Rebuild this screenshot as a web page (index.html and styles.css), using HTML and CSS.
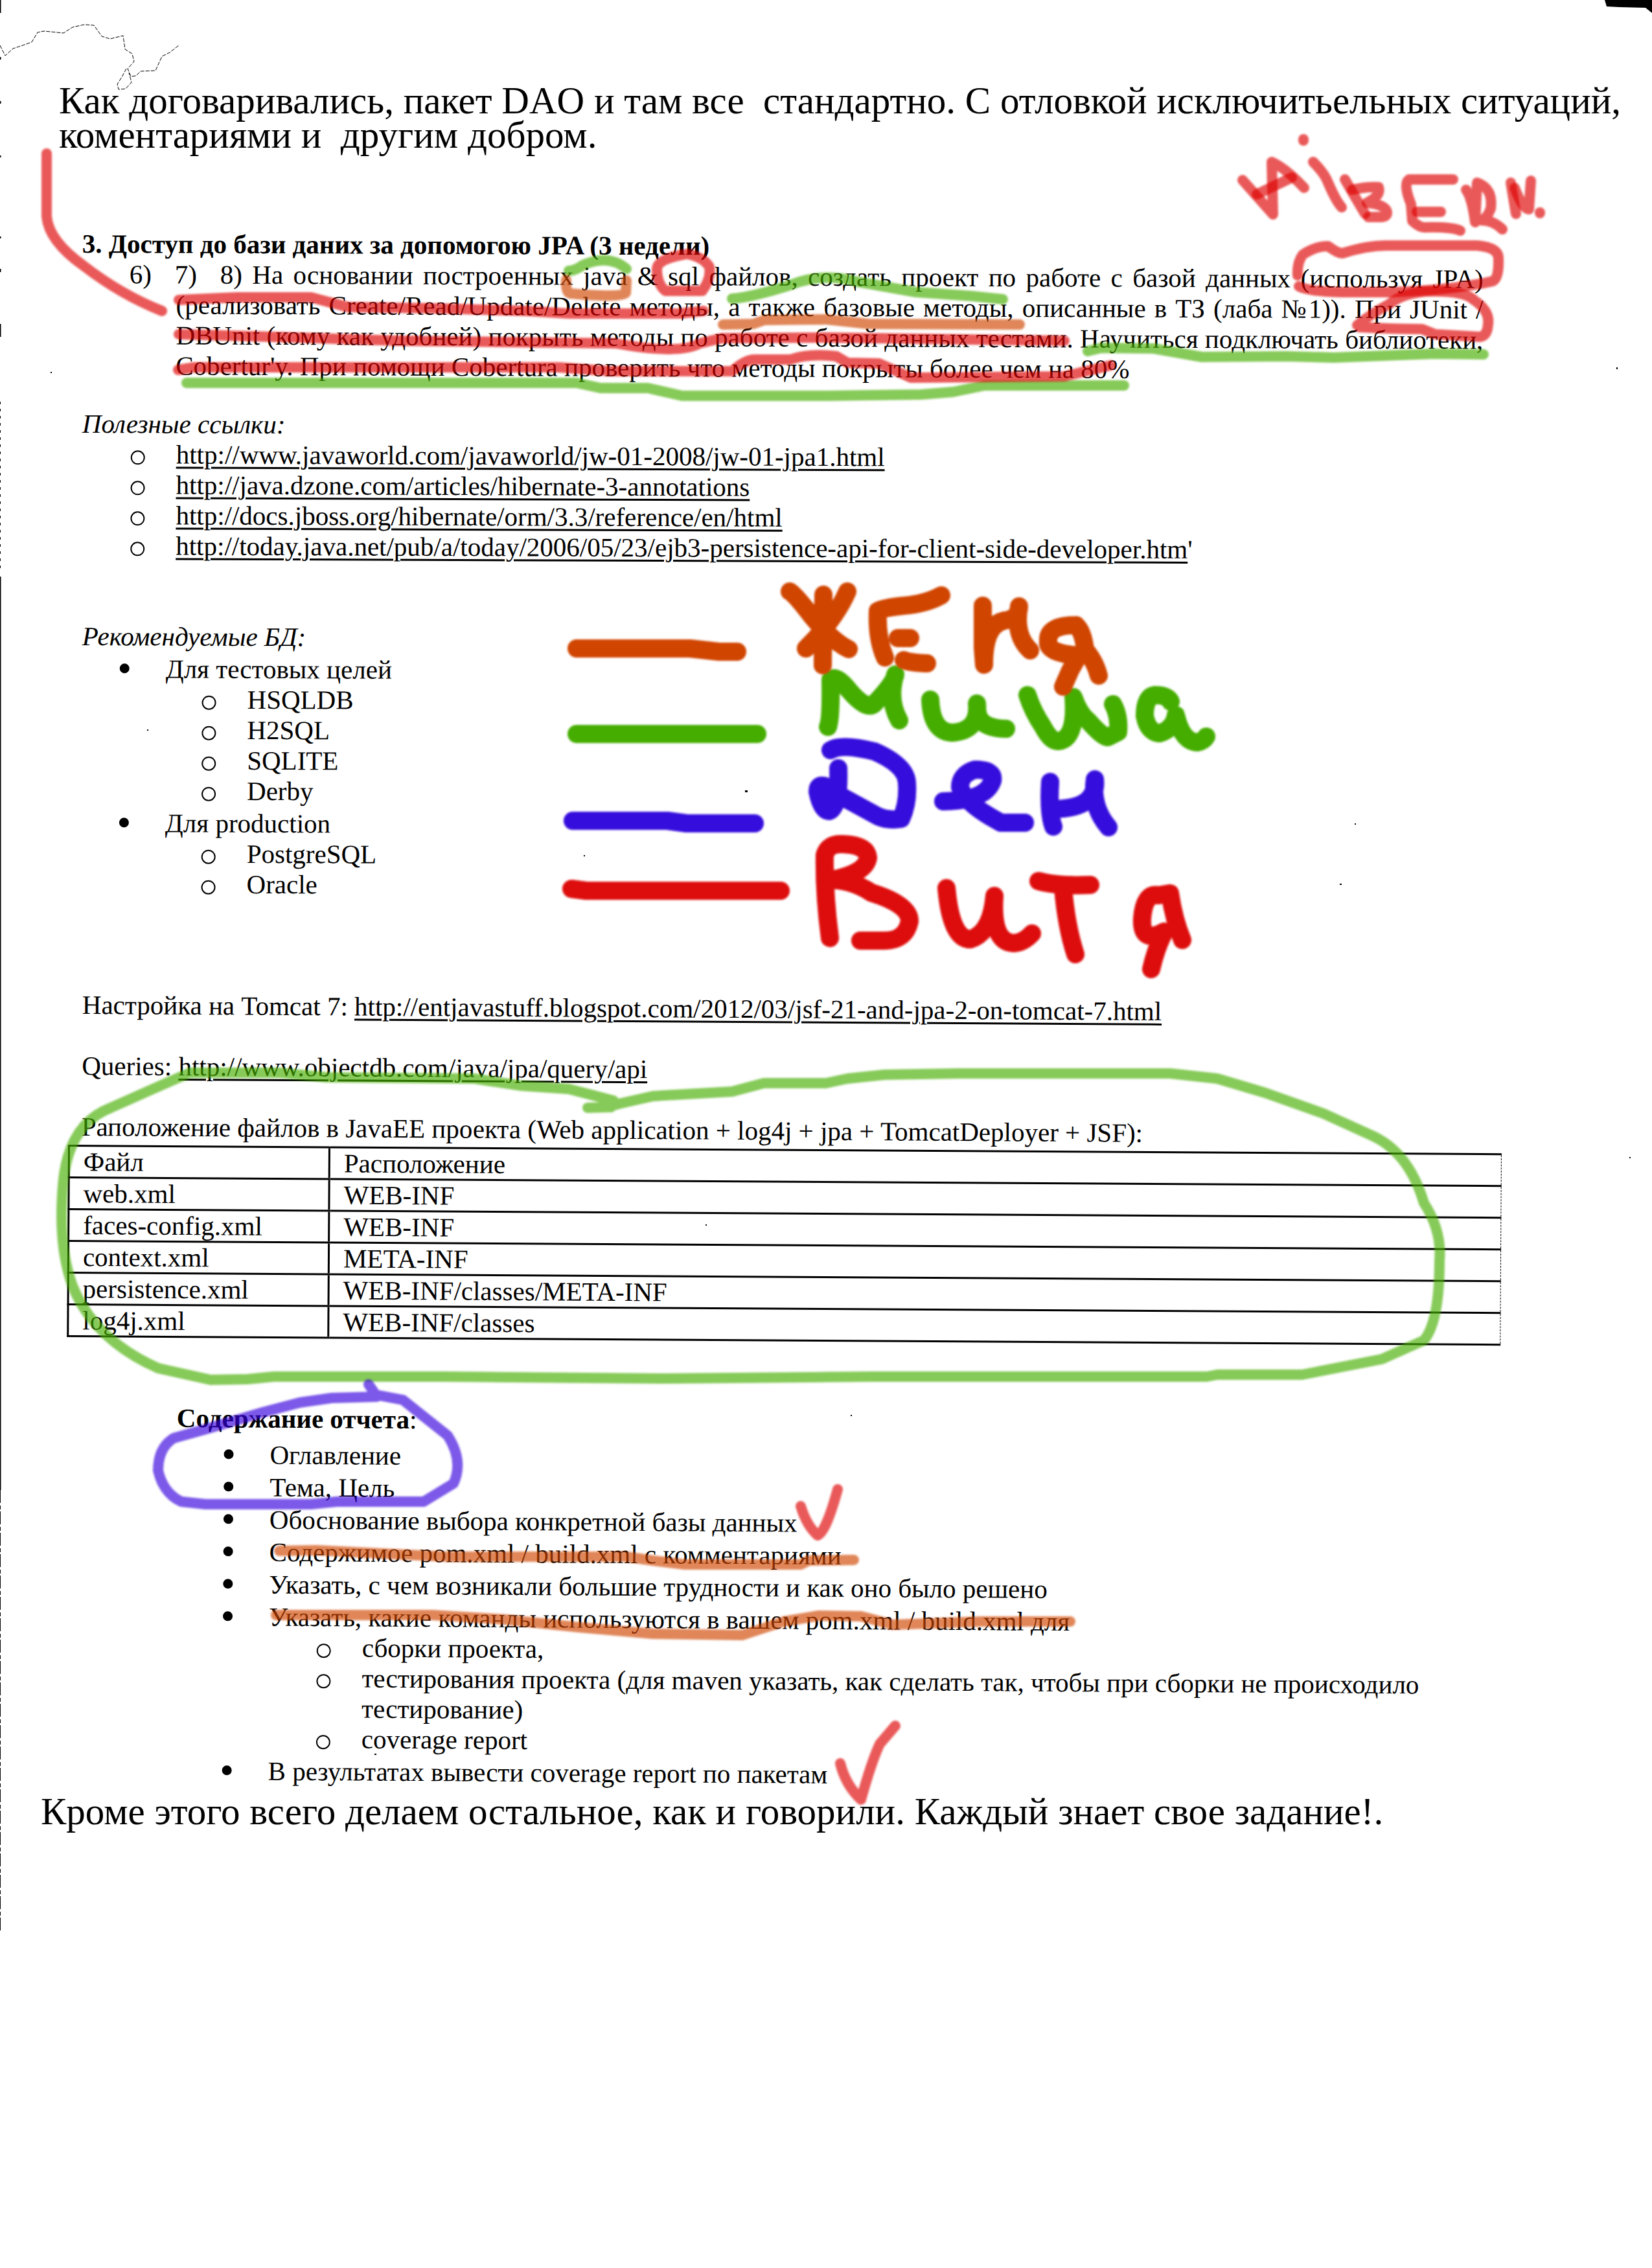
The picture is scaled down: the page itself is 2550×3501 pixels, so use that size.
FILE: index.html
```html
<!DOCTYPE html>
<html lang="ru">
<head>
<meta charset="utf-8">
<title>Доступ до бази даних за допомогою JPA</title>
<link rel="stylesheet" href="styles.css">
</head>
<body>
<main class="sheet">
  <p class="note">Как договаривались, пакет DAO и там все&nbsp; стандартно. С отловкой исключитьельных ситуаций,<br>коментариями и&nbsp; другим добром.</p>

  <section class="task tilt-slight">
    <h1 class="title">3. Доступ до бази даних за допомогою JPA (3 недели)</h1>
    <div class="task-body">
      <div class="task-first"><span class="num">6)</span><span class="num">7)</span><span class="line">8) На основании построенных java &amp; sql файлов, создать проект по работе с базой данных (используя JPA)</span></div>
      <span class="line">(реализовать Create/Read/Update/Delete методы, а также базовые методы, описанные в ТЗ (лаба №1)). При JUnit /</span>
      <span class="line">DBUnit (кому как удобней) покрыть методы по работе с базой данных тестами. Научиться подключать библиотеки,</span>
      <span class="line last">Cobertur'y. При помощи Cobertura проверить что методы покрыты более чем на 80%</span>
    </div>
  </section>

  <section class="links tilt-slight">
    <h2 class="subtitle">Полезные ссылки:</h2>
    <ul class="link-list">
      <li class="ring"><a href="http://www.javaworld.com/javaworld/jw-01-2008/jw-01-jpa1.html">http://www.javaworld.com/javaworld/jw-01-2008/jw-01-jpa1.html</a></li>
      <li class="ring"><a href="http://java.dzone.com/articles/hibernate-3-annotations">http://java.dzone.com/articles/hibernate-3-annotations</a></li>
      <li class="ring"><a href="http://docs.jboss.org/hibernate/orm/3.3/reference/en/html">http://docs.jboss.org/hibernate/orm/3.3/reference/en/html</a></li>
      <li class="ring"><a href="http://today.java.net/pub/a/today/2006/05/23/ejb3-persistence-api-for-client-side-developer.html">http://today.java.net/pub/a/today/2006/05/23/ejb3-persistence-api-for-client-side-developer.htm</a>'</li>
    </ul>
  </section>

  <section class="databases tilt-slight">
    <h2 class="subtitle">Рекомендуемые БД:</h2>
    <ul class="db-list">
      <li class="dot">Для тестовых целей
        <ul class="sub-list">
          <li class="ring">HSQLDB</li>
          <li class="ring">H2SQL</li>
          <li class="ring">SQLITE</li>
          <li class="ring">Derby</li>
        </ul>
      </li>
      <li class="dot">Для production
        <ul class="sub-list">
          <li class="ring">PostgreSQL</li>
          <li class="ring">Oracle</li>
        </ul>
      </li>
    </ul>
  </section>

  <section class="setup tilt">
    <p>Настройка на Tomcat 7: <a href="http://entjavastuff.blogspot.com/2012/03/jsf-21-and-jpa-2-on-tomcat-7.html">http://entjavastuff.blogspot.com/2012/03/jsf-21-and-jpa-2-on-tomcat-7.html</a></p>
    <p>Queries: <a href="http://www.objectdb.com/java/jpa/query/api">http://www.objectdb.com/java/jpa/query/api</a></p>
    <p>Раположение файлов в JavaEE проекта (Web application + log4j + jpa + TomcatDeployer + JSF):</p>
  </section>

  <div class="files tilt">
    <table>
      <thead><tr><th scope="col">Файл</th><th scope="col">Расположение</th></tr></thead>
      <tbody>
        <tr><td>web.xml</td><td>WEB-INF</td></tr>
        <tr><td>faces-config.xml</td><td>WEB-INF</td></tr>
        <tr><td>context.xml</td><td>META-INF</td></tr>
        <tr><td>persistence.xml</td><td>WEB-INF/classes/META-INF</td></tr>
        <tr><td>log4j.xml</td><td>WEB-INF/classes</td></tr>
      </tbody>
    </table>
  </div>

  <section class="report tilt">
    <h2 class="report-title">Содержание отчета<span class="colon">:</span></h2>
    <ul class="report-list">
      <li class="dot">Оглавление</li>
      <li class="dot">Тема, Цель</li>
      <li class="dot">Обоснование выбора конкретной базы данных</li>
      <li class="dot">Содержимое pom.xml / build.xml с комментариями</li>
      <li class="dot">Указать, с чем возникали большие трудности и как оно было решено</li>
      <li class="dot">Указать, какие команды используются в вашем pom.xml / build.xml для
        <ul class="report-sub">
          <li class="ring">сборки проекта,</li>
          <li class="ring">тестирования проекта (для maven указать, как сделать так, чтобы при сборки не происходило<br>тестирование)</li>
          <li class="ring">coverage report</li>
        </ul>
      </li>
      <li class="dot">В результатах вывести coverage report по пакетам</li>
    </ul>
  </section>

  <p class="note closing">Кроме этого всего делаем остальное, как и говорили. Каждый знает свое задание!.</p>

  <svg class="ink" viewBox="0 0 2550 3501" role="img" aria-label="Пометки маркером: AiBERN, Женя, Миша, Ден, Витя">
    <defs><filter id="soft" x="0" y="0" width="2550" height="3501" filterUnits="userSpaceOnUse"><feGaussianBlur stdDeviation="1.6"/></filter></defs>

    <!-- scanner edge, stray thread and specks -->
    <g class="scan">
      <path d="M0 0V20M0 88V92M0 156V160M0 240V243M0 365V368M0 415V420M0 500V520" stroke-width="3"/>
      <path d="M0 620V880" stroke-width="2" stroke-dasharray="4 7"/>
      <path d="M0 890V2300" stroke-width="3"/>
      <path d="M0 2300V2980" stroke-width="2" stroke-dasharray="20 4 6 3"/>
      <path d="M0 70L8 86 20 75 35 70 49 65 58 50 68 48 98 51 112 42 130 38 145 39 157 56 170 60 190 55 193 76 204 83 207 95 197 106 202 118 210 117 217 110 240 109 250 87 262 81 276 70M195 106L188 119 181 130 183 138 194 137 203 127 199 112" stroke-width="1" stroke-dasharray="6 2"/>
      <path class="solid" d="M2477 0H2550V20L2540 12 2500 11 2480 10Z"/>
      <path class="solid" d="M1150 1220h4v3h-4zM227 1126h2v2h-2zM901 1320h2v2h-2zM2068 1364h3v2h-3zM2091 1271h2v2h-2zM2495 567h2v3h-2zM78 574h2v2h-2zM1089 1890h2v2h-2zM2515 1786h2v2h-2zM1313 2184h2v2h-2zM578 2707h3v2h-3z"/>
    </g>

    <g class="marker green" filter="url(#soft)">
      <path d="M878 418Q888 418 900 409 940 392 967 415"/>
      <path d="M1130 461Q1160 459 1220 440 1270 420 1324 435L1414 451 1500 457 1548 462"/>
      <path d="M1679 542L1700 537 1781 538 1855 551 1986 550 2059 552 2214 546 2290 547"/>
      <path d="M288 591L890 591 927 599 1000 599 1053 611 1275 611 1422 609 1471 605 1520 595 1735 595"/>
      <path d="M907 1710L943 1709 947 1699 878 1681 805 1676 732 1665 504 1663 431 1656 293 1656 236 1681 171 1710Q108 1734 98 1820 88 1920 112 1985 145 2068 244 2112L325 2130 382 2129 423 2125 683 2125 1024 2128 1348 2125 1863 2125 1879 2122 2010 2122 2133 2098 2198 2069Q2222 2040 2222 1946 2226 1900 2198 1857 2175 1780 2120 1754L2043 1719 1953 1687 1879 1665 1806 1657 1479 1657 1365 1659 1308 1665 1275 1672 1179 1672 1130 1685 1008 1692 959 1703 940 1708"/>
    </g>
    <g class="marker orange" filter="url(#soft)">
      <path d="M874 432Q873 452 880 453 960 460 966 452L967 433"/>
      <path d="M1116 501L1163 500 1180 494 1275 493 1340 500 1574 501"/>
      <path d="M431 2394L488 2393 569 2397 691 2403 967 2403 1008 2409 1057 2415 1236 2415 1248 2409 1318 2408"/>
      <path d="M426 2493L667 2493 780 2500 894 2512 1008 2522 1146 2524 1210 2503 1264 2494 1329 2495 1378 2508 1516 2503 1652 2503"/>
    </g>
    <g class="marker violet" filter="url(#soft)">
      <path d="M569 2137L582 2156 512 2158 463 2165 406 2180 325 2204 268 2220Q244 2235 244 2270 252 2305 280 2318L317 2322 480 2322 520 2318 654 2318 700 2290Q716 2255 691 2216L642 2177 622 2161 585 2154"/>
    </g>
    <g class="marker red" filter="url(#soft)">
      <path d="M72 237V334Q75 372 130 411 187 455 250 480"/>
      <path d="M1055 393Q1015 400 1014 415 1014 438 1027 449H1084Q1098 430 1095 412 1085 396 1060 392"/>
      <path d="M276 463L366 459 480 459 537 474 675 476 813 480 878 484 1049 484 1086 480"/>
      <path d="M276 516L423 520 618 526 950 530Q1050 548 1080 530L1114 522 1275 521 1643 526"/>
      <path d="M275 571L300 567 862 567 943 573 1130 573Q1150 555 1165 555H1220Q1250 545 1291 550L1308 560 1357 561 1406 583 1643 581 1714 564"/>
      <path d="M2003 425Q2002 405 2011 393 2030 380 2050 380 2065 391 2072 391 2110 379 2140 379H2280Q2314 382 2313 400 2314 430 2304 434 2250 447 2150 451H2070Q2020 450 2005 442"/>
      <path d="M2095 502Q2120 482 2145 469 2165 453 2200 450 2260 448 2275 463 2300 480 2297 500 2296 518 2285 520L2215 516 2195 508Q2150 508 2098 505"/>
      <path d="M1918 278L1965 331 1963 250Q1985 260 2013 290"/><path d="M1940 300L1994 274"/>
      <path d="M2012 215V217"/><path d="M2027 250Q2045 268 2050 282 2062 310 2071 320"/>
      <path d="M2076 277L2087 296 2107 330"/><path d="M2087 293Q2110 288 2128 289 2132 302 2110 313 2140 316 2141 328 2141 335 2132 335H2112"/>
      <path d="M2243 277H2175Q2165 283 2178 315L2180 341Q2192 352 2200 351 2240 350 2254 356"/><path d="M2187 327H2224"/>
      <path d="M2263 293Q2272 305 2277 343L2280 282Q2305 290 2301 322 2295 338 2286 340 2305 340 2319 354"/>
      <path d="M2332 282L2340 330"/><path d="M2338 290Q2350 322 2360 323L2363 279"/><path d="M2377 328V329"/>
      <path d="M1236 2325Q1245 2355 1262 2370 1275 2365 1293 2299"/><path d="M1297 2722Q1305 2755 1329 2778 1345 2720 1358 2692L1382 2664"/>
    </g>

    <!-- legend: one brush colour per person -->
    <g class="brush green" filter="url(#soft)">
      <path d="M890 1133H1169"/>
      <path d="M1278 1122Q1283 1110 1282 1049 1292 1042 1310 1065 1338 1098 1350 1086 1382 1052 1382 1041 1370 1080 1388 1112"/>
      <path d="M1436 1080Q1438 1130 1470 1131 1512 1128 1508 1086M1509 1100Q1512 1124 1553 1125"/>
      <path d="M1586 1073Q1594 1098 1610 1122 1622 1145 1634 1144 1662 1140 1657 1076 1666 1102 1680 1113 1702 1138 1710 1138L1726 1130Q1728 1105 1718 1087"/>
      <path d="M1807 1083Q1802 1073 1783 1073 1767 1075 1767 1105 1772 1131 1790 1132 1812 1125 1815 1104 1825 1145 1848 1146 1858 1144 1862 1137"/>
    </g>
    <g class="brush orange" filter="url(#soft)">
      <path d="M890 1001H1065L1110 1006H1138"/>
      <path d="M1219 913Q1226 916 1252 950 1285 990 1310 1002M1308 913Q1290 955 1244 1001M1271 918L1270 1027"/>
      <path d="M1453 919Q1430 932 1395 935 1365 938 1355 943 1353 985 1366 1015M1386 985H1405M1395 1019Q1405 1023 1431 1024"/>
      <path d="M1517 935V1000L1519 1026Q1519 965 1550 958 1573 955 1573 936 1565 980 1590 1004"/>
      <path d="M1661 965Q1616 965 1618 990 1615 1008 1664 1012M1661 965Q1672 975 1675 1003 1690 1020 1696 1043M1666 1010L1652 1035 1641 1060"/>
    </g>
    <g class="brush violet" filter="url(#soft)">
      <path d="M884 1267H1030L1060 1271H1165"/>
      <path d="M1282 1158Q1298 1147 1350 1160 1400 1182 1400 1210 1402 1240 1391 1264 1370 1267 1355 1260L1300 1230Q1262 1200 1262 1222 1268 1252 1280 1252 1296 1245 1294 1186"/>
      <path d="M1456 1237Q1522 1236 1532 1205 1535 1188 1505 1188 1482 1195 1482 1215 1488 1240 1545 1270H1582"/>
      <path d="M1621 1207Q1618 1255 1626 1276M1626 1249Q1695 1248 1690 1203 1684 1245 1711 1277"/>
    </g>
    <g class="brush red" filter="url(#soft)">
      <path d="M882 1372L905 1375H1205"/>
      <path d="M1281 1448Q1272 1380 1273 1320 1278 1302 1300 1303 1338 1304 1340 1324 1336 1348 1285 1358 1318 1360 1345 1378 1404 1396 1404 1422 1398 1452 1365 1452H1328"/>
      <path d="M1461 1371Q1468 1450 1498 1450 1530 1440 1535 1383 1530 1455 1565 1456 1580 1455 1593 1441"/>
      <path d="M1603 1360Q1630 1368 1683 1366M1641 1371Q1646 1430 1660 1473"/>
      <path d="M1797 1438Q1761 1458 1763 1418 1766 1378 1788 1382L1806 1379Q1812 1420 1825 1451M1796 1441Q1784 1465 1777 1496"/>
    </g>
  </svg>
</main>
</body>
</html>
```
FILE: styles.css
```css
* { box-sizing: border-box; }

body {
  margin: 0;
  background: #fff;
  color: #000;
  font: 41px/47px "Liberation Serif", "Times New Roman", serif;
}

h1, h2, p, ul { margin: 0; padding: 0; font-size: inherit; }
ul { list-style: none; }
a { color: inherit; text-decoration: underline; text-decoration-thickness: 3px; text-underline-offset: 5px; }

.sheet {
  position: relative;
  min-height: 100vh;
  padding: 129px 0 0 127px;
  overflow: hidden;
}

/* the scanned part sits slightly askew on the glass */
.tilt, .tilt-slight { transform-origin: 0 0; }
.tilt { transform: rotate(0.34deg); }
.tilt-slight { transform: rotate(0.2deg); }

.note {
  margin-left: -36px;
  font-size: 59px;
  line-height: 53px;
}
.closing { margin: 14px 0 0 -64px; }

.task { margin-top: 118px; }
.title { font-weight: bold; }
.task-body { padding: 0 260px 0 145px; }
.task-first { display: flex; margin-left: -72px; }
.num { flex: none; width: 70px; }
.line { display: block; flex: 1; white-space: nowrap; text-align: justify; text-align-last: justify; }
.last { text-align-last: left; }

.links { margin-top: 43px; }
.subtitle { font-weight: normal; font-style: italic; }
.link-list { padding-left: 145px; }

.databases { margin-top: 93px; }
.db-list { padding-left: 129px; }
.sub-list { padding-left: 126px; }

.dot, .ring { position: relative; }
.dot { margin-top: 3px; }
.dot::before, .ring::before { content: ""; position: absolute; border-radius: 50%; }
.dot::before { left: -71px; top: 15px; width: 15px; height: 15px; background: #000; }
.ring::before { left: -70px; top: 17px; width: 18px; height: 18px; border: 2px solid #000; }

.setup { display: flex; flex-direction: column; gap: 47px; margin-top: 140px; }

.files { margin: 4px 232px 0 -22px; }
table { width: 100%; border-collapse: collapse; table-layout: fixed; border-right: 1px dashed #000; }
th, td {
  height: 49px;
  padding: 0 0 0 21px;
  border: 3px solid #000;
  border-right: 0;
  font-weight: normal;
  text-align: left;
  line-height: 46px;
}
th:first-child { width: 402px; }

.report { margin-top: 101px; padding-left: 146px; }
.report-title { margin-bottom: 9px; }
.colon { font-weight: normal; }
.report-list { padding-left: 144px; }
.report-sub { padding-left: 144px; }

.ink { position: absolute; top: 0; left: 0; width: 100%; height: auto; pointer-events: none; }
.scan { fill: none; stroke: #000; }
.solid { fill: #000; stroke: none; }
.marker, .brush { fill: none; stroke-linecap: round; stroke-linejoin: round; }
.marker { stroke-width: 16px; }
.marker path { stroke-opacity: 0.65; }
.brush { stroke-width: 28px; }
.green { stroke: #45ad00; }
.orange { stroke: #d04500; }
.violet { stroke: #3508dd; }
.red { stroke: #de0808; }
```
